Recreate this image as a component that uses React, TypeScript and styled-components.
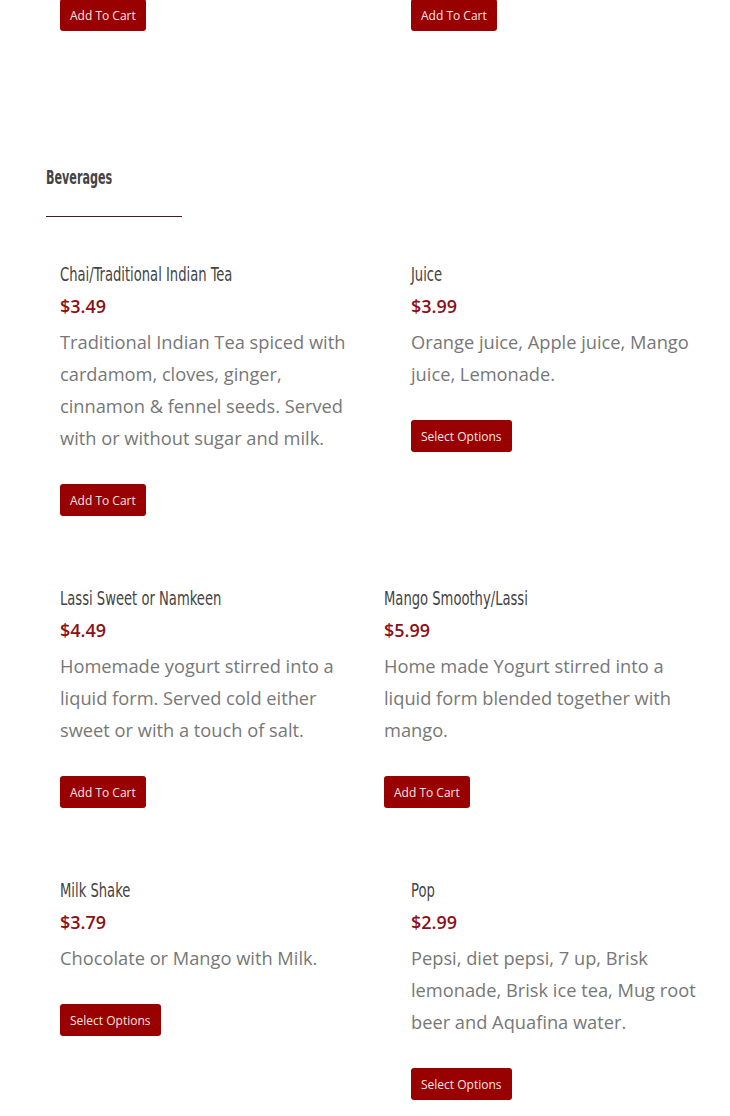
import React from "react";
import styled, { createGlobalStyle } from "styled-components";

const Global = createGlobalStyle`
  html, body { margin: 0; padding: 0; background: #fff; }
  body { font-family: "Open Sans", "Liberation Sans", sans-serif; }
`;

const Page = styled.div`
  width: 730px;
  padding-left: 46px;
  box-sizing: border-box;
  overflow: hidden;
`;

const Columns = styled.div`
  display: grid;
  grid-template-columns: 324px 1fr;
`;

const TopRow = styled(Columns)`
  margin-top: -1px;
`;

const Cell = styled.div<{ $pad: number }>`
  padding-left: ${(p) => p.$pad}px;
  min-width: 0;
`;

const Heading = styled.h2`
  margin: 130px 0 0;
  height: 32px;
  font-family: "DejaVu Sans Condensed", "DejaVu Sans", sans-serif;
  font-stretch: condensed;
  font-weight: 700;
  font-size: 20px;
  line-height: 32px;
  color: #444;
  white-space: nowrap;
`;

const Squeezed = styled.span<{ $scale: number }>`
  display: inline-block;
  transform: scaleX(${(p) => p.$scale});
  transform-origin: left center;
`;

const Divider = styled.div`
  width: 136px;
  height: 1px;
  background: #4a1a24;
  margin-top: 23px;
`;

const ItemsGrid = styled(Columns)`
  margin-top: 41px;
  row-gap: 66px;
`;

const Title = styled.h3`
  margin: 0;
  height: 32px;
  font-family: "DejaVu Sans Condensed", "DejaVu Sans", sans-serif;
  font-stretch: condensed;
  font-weight: 400;
  font-size: 20px;
  line-height: 32px;
  color: #444;
  white-space: nowrap;
`;

const Price = styled.div`
  font-family: "Open Sans", sans-serif;
  font-weight: 600;
  font-size: 18px;
  line-height: 32px;
  color: #8c1016;
`;

const Desc = styled.p<{ $width: number }>`
  margin: 4px 0 0;
  width: ${(p) => p.$width}px;
  font-family: "Open Sans", sans-serif;
  font-size: 18.25px;
  line-height: 32px;
  color: #777;
`;

const Button = styled.button`
  display: inline-flex;
  align-items: center;
  height: 32px;
  padding: 0 10px;
  margin-top: 30px;
  border: none;
  border-radius: 3px;
  background: #990000;
  color: #f6e6e6;
  font-family: "Open Sans", sans-serif;
  font-size: 12px;
  cursor: pointer;
`;

const TopButton = styled(Button)`
  margin-top: 0;
`;

type Item = {
  title: string;
  price: string;
  desc: string;
  action: string;
  pad: number;
};

const items: Item[] = [
  {
    title: "Chai/Traditional Indian Tea",
    price: "$3.49",
    desc: "Traditional Indian Tea spiced with cardamom, cloves, ginger, cinnamon & fennel seeds. Served with or without sugar and milk.",
    action: "Add To Cart",
    pad: 14,
  },
  {
    title: "Juice",
    price: "$3.99",
    desc: "Orange juice, Apple juice, Mango juice, Lemonade.",
    action: "Select Options",
    pad: 41,
  },
  {
    title: "Lassi Sweet or Namkeen",
    price: "$4.49",
    desc: "Homemade yogurt stirred into a liquid form. Served cold either sweet or with a touch of salt.",
    action: "Add To Cart",
    pad: 14,
  },
  {
    title: "Mango Smoothy/Lassi",
    price: "$5.99",
    desc: "Home made Yogurt stirred into a liquid form blended together with mango.",
    action: "Add To Cart",
    pad: 14,
  },
  {
    title: "Milk Shake",
    price: "$3.79",
    desc: "Chocolate or Mango with Milk.",
    action: "Select Options",
    pad: 14,
  },
  {
    title: "Pop",
    price: "$2.99",
    desc: "Pepsi, diet pepsi, 7 up, Brisk lemonade, Brisk ice tea, Mug root beer and Aquafina water.",
    action: "Select Options",
    pad: 41,
  },
];

export default function App() {
  return (
    <Page>
      <Global />
      <TopRow>
        <Cell $pad={14}>
          <TopButton>Add To Cart</TopButton>
        </Cell>
        <Cell $pad={41}>
          <TopButton>Add To Cart</TopButton>
        </Cell>
      </TopRow>
      <Heading>
        <Squeezed $scale={0.62}>Beverages</Squeezed>
      </Heading>
      <Divider />
      <ItemsGrid>
        {items.map((it) => (
          <Cell key={it.title} $pad={it.pad}>
            <Title>
              <Squeezed $scale={0.73}>{it.title}</Squeezed>
            </Title>
            <Price>{it.price}</Price>
            <Desc $width={300}>{it.desc}</Desc>
            <Button>{it.action}</Button>
          </Cell>
        ))}
      </ItemsGrid>
    </Page>
  );
}
